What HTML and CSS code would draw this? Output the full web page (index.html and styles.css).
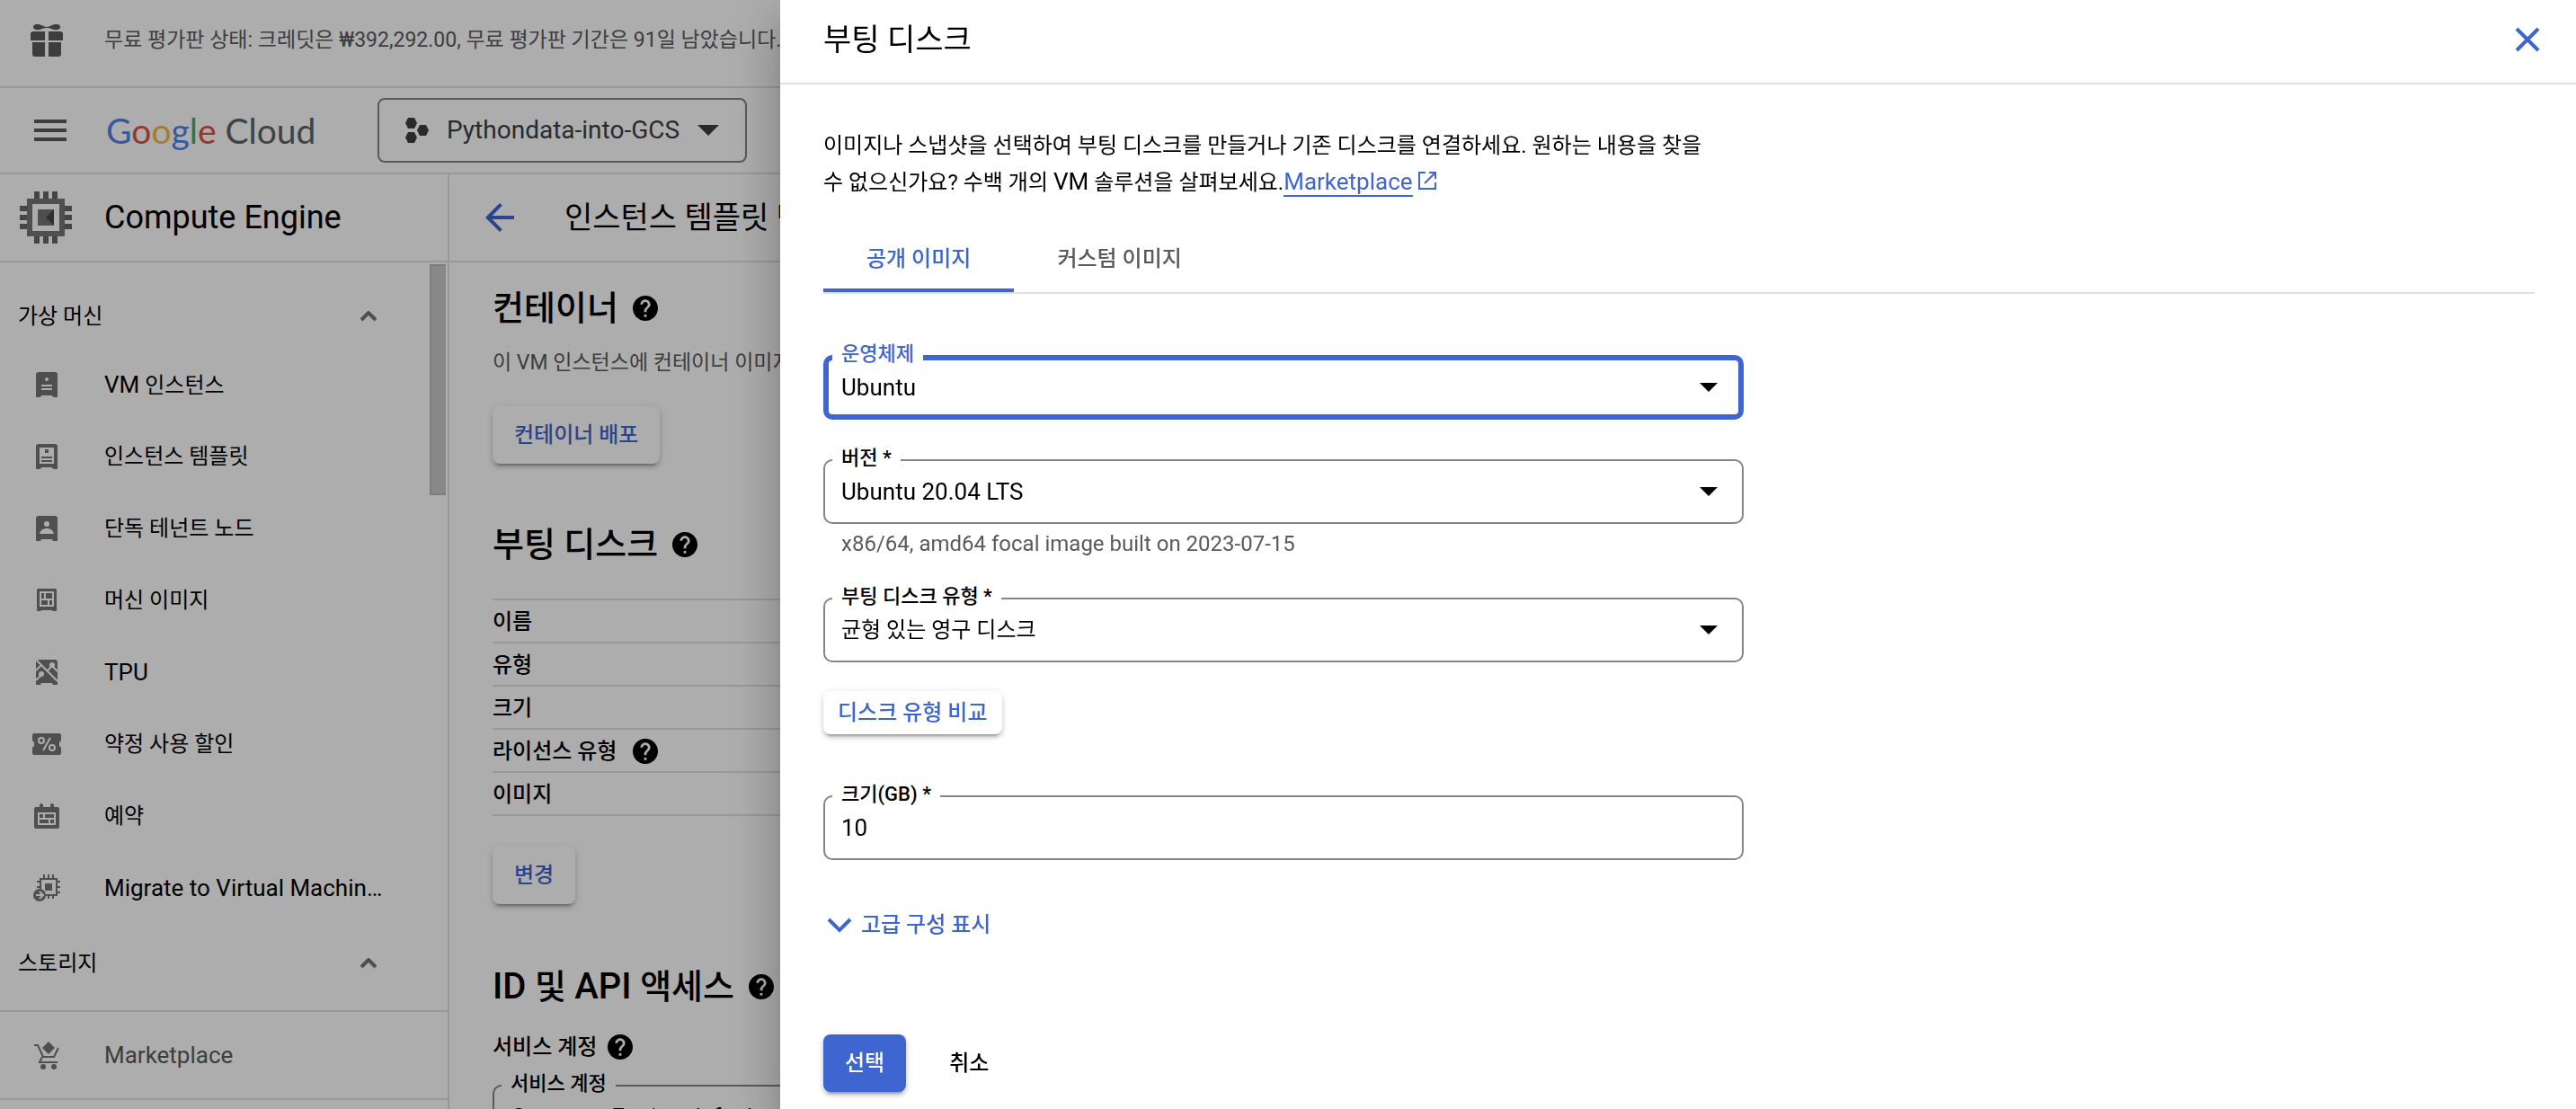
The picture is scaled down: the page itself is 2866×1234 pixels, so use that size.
FILE: index.html
```html
<!DOCTYPE html>
<html lang="ko">
<head>
  <meta charset="UTF-8" />
  <meta name="viewport" content="width=device-width, initial-scale=1.0" />
  <title>인스턴스 템플릿 만들기</title>
  <link rel="stylesheet" href="styles.css">
</head>
<body>

  <svg class="sprite" aria-hidden="true">
    <symbol id="icon-help" viewBox="2 2 20 20">
      <path d="M12 2C6.48 2 2 6.48 2 12s4.48 10 10 10 10-4.48 10-10S17.52 2 12 2zm1 17h-2v-2h2v2zm2.07-7.75l-.9.92C13.45 12.9 13 13.5 13 15h-2v-.5c0-1.1.45-2.1 1.17-2.83l1.24-1.26c.37-.36.59-.86.59-1.41 0-1.1-.9-2-2-2s-2 .9-2 2H8c0-2.21 1.79-4 4-4s4 1.79 4 4c0 .88-.36 1.68-.93 2.25z"/>
    </symbol>
    <symbol id="icon-arrow" viewBox="0 0 20 10">
      <path d="M0 0h20L10 10z"/>
    </symbol>
    <symbol id="icon-up" viewBox="0 0 20 12">
      <path d="M2 10l8-8 8 8" fill="none" stroke="currentColor" stroke-width="4"/>
    </symbol>
  </svg>

  <div class="app">
    <div class="trial">
      <svg class="trial-icon" viewBox="0 0 36 36">
        <path d="M3 3c0-3 4-4 9-2 3 1 4 2 6 2s3-1 6-2c5-2 9-1 9 2 0 4-6 4-10 2-2-1-3-1-5-1s-3 0-5 1c-4 2-10 2-10-2z"/>
        <path d="M3 8h13v10H0v-7a3 3 0 0 1 3-3zM20 8h13a3 3 0 0 1 3 3v7H20zM2 20h14v16H5a3 3 0 0 1-3-3zM20 20h14v13a3 3 0 0 1-3 3H20z"/>
      </svg>
      <span>무료 평가판 상태: 크레딧은 ₩392,292.00, 무료 평가판 기간은 91일 남았습니다.</span>
    </div>

    <header class="topbar">
      <button class="menu-button" aria-label="메뉴">
        <svg viewBox="0 0 36 24"><path d="M0 0h36v4H0zM0 10h36v4H0zM0 20h36v4H0z"/></svg>
      </button>
      <a class="logo" href="#"><span class="g-blue">G</span><span class="g-red">o</span><span class="g-yellow">o</span><span class="g-blue">g</span><span class="g-green">l</span><span class="g-red">e</span> <span class="cloud">Cloud</span></a>
      <button class="project">
        <svg class="project-icon" viewBox="0 0 26 28">
          <path d="M3 0h7l3 6-3 6H3L0 6zM3 16h7l3 6-3 6H3l-3-6zM16 8h7l3 6-3 6h-7l-3-6z"/>
        </svg>
        Pythondata-into-GCS
        <svg class="project-arrow"><use href="#icon-arrow"/></svg>
      </button>
    </header>

    <div class="body">
      <aside class="sidebar">
        <div class="product">
          <svg class="product-icon" viewBox="0 0 58 58">
            <path fill="#666" d="M16 0h6v8h-6zM26 0h6v8h-6zM36 0h6v8h-6zM16 50h6v8h-6zM26 50h6v8h-6zM36 50h6v8h-6zM0 16h8v6H0zM0 26h8v6H0zM0 36h8v6H0zM50 16h8v6h-8zM50 26h8v6h-8zM50 36h8v6h-8z"/>
            <path fill="#757575" fill-rule="evenodd" d="M8 8h42v42H8zM14 14v30h30V14z"/>
            <path fill="#757575" d="M20 20h18v18H20z"/>
            <path fill="#484848" d="M38 20v18l-9-9z"/>
          </svg>
          <span>Compute Engine</span>
        </div>

        <nav class="nav">
          <button class="nav-group">가상 머신 <svg><use href="#icon-up"/></svg></button>
          <a class="nav-item" href="#">
            <svg viewBox="0 0 32 32">
              <path d="M7 2h18a3 3 0 0 1 3 3v25h-5l-1-2H10l-1 2H4V5a3 3 0 0 1 3-3z"/>
              <path fill="#fff" d="M10 16h12v2H10zM10 20h12v2H10z"/><circle fill="#fff" cx="16" cy="10" r="2"/>
            </svg>
            <span><span class="latin">VM</span> 인스턴스</span>
          </a>
          <a class="nav-item" href="#">
            <svg viewBox="0 0 32 32">
              <path fill-rule="evenodd" d="M7 2h18a3 3 0 0 1 3 3v25h-5l-1-2H10l-1 2H4V5a3 3 0 0 1 3-3zM8 6v18h16V6z"/>
              <path d="M14 8h4v4h-4zM10 16h12v2H10zM10 20h12v2H10z"/>
            </svg>
            <span>인스턴스 템플릿</span>
          </a>
          <a class="nav-item" href="#">
            <svg viewBox="0 0 32 32">
              <path d="M7 2h18a3 3 0 0 1 3 3v25h-5l-1-2H10l-1 2H4V5a3 3 0 0 1 3-3z"/>
              <circle fill="#fff" cx="16" cy="11" r="3"/><path fill="#fff" d="M8 22c1-4 4-6 8-6s7 2 8 6z"/>
            </svg>
            <span>단독 테넌트 노드</span>
          </a>
          <a class="nav-item" href="#">
            <svg viewBox="0 0 32 32">
              <path fill-rule="evenodd" d="M6 3h20l1 1v24h-4l-1-1H10l-1 1H5V4zM8 6v17h16V6z"/>
              <path d="M10 8h3v6h-3zM15 8h7v6h-7zM10 16h7v5h-7zM19 16h3v5h-3z"/>
            </svg>
            <span>머신 이미지</span>
          </a>
          <a class="nav-item" href="#">
            <svg viewBox="0 0 32 32">
              <path d="M7 2h18a3 3 0 0 1 3 3v25h-5l-1-2H10l-1 2H4V5a3 3 0 0 1 3-3z"/>
              <path d="M4 2l24 24M4 14l6-6M4 25l7-7M16 15l7-7M22 9l6 6" fill="none" stroke="#fff" stroke-width="2"/>
              <circle fill="#fff" cx="22" cy="8" r="3"/><circle fill="#fff" cx="10" cy="18" r="3"/>
            </svg>
            <span class="latin">TPU</span>
          </a>
          <a class="nav-item" href="#">
            <svg viewBox="0 0 32 32">
              <path d="M2 4h28a2 2 0 0 1 2 2v6l-2 2v4l2 2v6a2 2 0 0 1-2 2H2a2 2 0 0 1-2-2v-6l2-2v-4l-2-2V6a2 2 0 0 1 2-2z"/>
              <g fill="none" stroke="#fff" stroke-width="2"><circle cx="10" cy="12" r="3"/><circle cx="22" cy="20" r="3"/><path d="M20 9l-8 14"/></g>
            </svg>
            <span>약정 사용 할인</span>
          </a>
          <a class="nav-item" href="#">
            <svg viewBox="0 0 32 32">
              <path fill-rule="evenodd" d="M8 6V4a2 2 0 0 1 4 0v2h8V4a2 2 0 0 1 4 0v2h4a2 2 0 0 1 2 2v20a2 2 0 0 1-2 2H4a2 2 0 0 1-2-2V8a2 2 0 0 1 2-2zM6 12v14h20V12z"/>
              <path d="M8 14h4v4H8zM14 14h10v4H14zM8 20h10v4H8zM20 20h4v4h-4z"/>
            </svg>
            <span>예약</span>
          </a>
          <a class="nav-item" href="#">
            <svg viewBox="0 0 32 32">
              <path fill-rule="evenodd" d="M8 5h20v20H8zM10 7v16h16V7zM14 11h8v8h-8z"/>
              <path d="M14 11h8v8h-8z"/>
              <path d="M12 1h2v4h-2zM17 1h2v4h-2zM22 1h2v4h-2zM17 25h2v3h-2zM22 25h2v3h-2zM28 8h3v2h-3zM28 14h3v2h-3zM28 20h3v2h-3zM5 8h3v2H5zM5 14h3v2H5z"/>
              <circle cx="8" cy="24" r="7"/>
              <path d="M4 24h7M8 20l4 4-4 4" fill="none" stroke="#fff" stroke-width="2"/>
            </svg>
            <span class="latin">Migrate to Virtual Machines</span>
          </a>
          <button class="nav-group">스토리지 <svg><use href="#icon-up"/></svg></button>
          <div class="scrollbar"></div>
        </nav>

        <a class="nav-footer" href="#">
          <svg viewBox="0 0 32 32">
            <path d="M18 1l7 7-7 7-7-7z"/>
            <path d="M2 5h4l6 13h12l5-10M11 18l-3 6h20" fill="none" stroke="currentColor" stroke-width="2"/>
            <circle cx="12" cy="29" r="3"/><circle cx="24" cy="29" r="3"/>
          </svg>
          <span class="latin">Marketplace</span>
        </a>
        <div class="nav-collapse"></div>
      </aside>

      <main class="main">
        <div class="page-title">
          <a class="back" href="#" aria-label="뒤로">
            <svg viewBox="4 4 16 16"><path d="M20 11H7.83l5.59-5.59L12 4l-8 8 8 8 1.41-1.41L7.83 13H20v-2z"/></svg>
          </a>
          <h1>인스턴스 템플릿 만들기</h1>
        </div>

        <div class="content">
          <h2>컨테이너 <svg class="help"><use href="#icon-help"/></svg></h2>
          <p class="hint">이 VM 인스턴스에 컨테이너 이미지를 배포합니다.</p>
          <button class="button">컨테이너 배포</button>

          <h2 class="disk-title">부팅 디스크 <svg class="help"><use href="#icon-help"/></svg></h2>
          <table class="details">
            <tr><th scope="row">이름</th></tr>
            <tr><th scope="row">유형</th></tr>
            <tr><th scope="row">크기</th></tr>
            <tr><th scope="row"><span class="with-help">라이선스 유형 <svg class="help"><use href="#icon-help"/></svg></span></th></tr>
            <tr><th scope="row">이미지</th></tr>
          </table>
          <button class="button">변경</button>

          <h2 class="access-title"><span><span class="latin-title">ID</span> 및 <span class="latin-title">API</span> 액세스</span> <svg class="help"><use href="#icon-help"/></svg></h2>
          <h3>서비스 계정 <svg class="help"><use href="#icon-help"/></svg></h3>
          <div class="field">
            <label for="account">서비스 계정</label>
            <select id="account"><option>Compute Engine default service account</option></select>
          </div>
        </div>
      </main>
    </div>
  </div>

  <div class="backdrop">
    <section class="drawer" role="dialog" aria-labelledby="drawer-title">
      <header class="drawer-header">
        <h2 id="drawer-title">부팅 디스크</h2>
        <button class="close" aria-label="닫기">
          <svg viewBox="0 0 28 28"><path d="M2 2l24 24M26 2L2 26" fill="none" stroke="currentColor" stroke-width="4"/></svg>
        </button>
      </header>

      <div class="drawer-body">
        <p class="intro">이미지나 스냅샷을 선택하여 부팅 디스크를 만들거나 기존 디스크를 연결하세요. 원하는 내용을 찾을 수 없으신가요? 수백 개의 <span class="latin">VM</span> 솔루션을 살펴보세요.<a class="latin" href="#">Marketplace</a>
          <svg class="external" viewBox="0 0 20 20"><path d="M8 1H1v18h18v-7M12 1h7v7M19 1L7 13" fill="none" stroke="currentColor" stroke-width="2"/></svg></p>

        <div class="tabs" role="tablist">
          <button class="tab active" role="tab" aria-selected="true">공개 이미지</button>
          <button class="tab" role="tab" aria-selected="false">커스텀 이미지</button>
        </div>

        <form class="form">
          <div class="field focused">
            <label for="os">운영체제</label>
            <select id="os"><option>Ubuntu</option></select>
            <svg class="arrow"><use href="#icon-arrow"/></svg>
          </div>

          <div class="field">
            <label for="version">버전 *</label>
            <select id="version"><option>Ubuntu 20.04 LTS</option></select>
            <svg class="arrow"><use href="#icon-arrow"/></svg>
          </div>
          <p class="helper">x86/64, amd64 focal image built on 2023-07-15</p>

          <div class="field">
            <label for="type">부팅 디스크 유형 *</label>
            <select id="type" class="korean"><option>균형 있는 영구 디스크</option></select>
            <svg class="arrow"><use href="#icon-arrow"/></svg>
          </div>

          <button type="button" class="button small">디스크 유형 비교</button>

          <div class="field size-field">
            <label for="size">크기(GB) *</label>
            <input id="size" type="text" value="10">
          </div>

          <button type="button" class="advanced">
            <svg viewBox="0 0 28 18"><path d="M2 3l12 12L26 3" fill="none" stroke="currentColor" stroke-width="4"/></svg>
            고급 구성 표시
          </button>

          <div class="actions">
            <button type="submit" class="button primary">선택</button>
            <button type="button" class="cancel">취소</button>
          </div>
        </form>
      </div>
    </section>
  </div>

</body>
</html>
```
FILE: styles.css
```css
* {
  box-sizing: border-box;
}

body {
  margin: 0;
  height: 100vh;
  overflow: hidden;
  background: #fff;
  color: #000;
  font-family: Roboto, "Noto Sans CJK KR", sans-serif;
  font-size: 24px;
  line-height: 32px;
}

h1, h2, h3, p {
  margin: 0;
  font-weight: 400;
}

button, select, input {
  font: inherit;
  color: inherit;
  background: none;
  border: 0;
  padding: 0;
  margin: 0;
}

a {
  color: inherit;
  text-decoration: none;
}

svg {
  fill: currentColor;
  flex: none;
}

.sprite {
  position: absolute;
  width: 0;
  height: 0;
}

/* Latin letters are set a step larger than Hangul */
.latin {
  font-size: 26px;
}

.app {
  height: 100vh;
  display: flex;
  flex-direction: column;
}

/* Top bars */
.trial {
  flex: none;
  display: flex;
  align-items: center;
  gap: 46px;
  height: 98px;
  padding: 0 34px 6px;
  border-bottom: 2px solid #e0e0e0;
  color: #5a5a5a;
  font-size: 23px;
  white-space: nowrap;
}

.trial-icon {
  width: 36px;
  height: 36px;
}

.topbar {
  flex: none;
  display: flex;
  align-items: center;
  height: 96px;
  padding-left: 38px;
  border-bottom: 2px solid #e0e0e0;
}

.menu-button {
  width: 36px;
  height: 24px;
  color: #5a5a5a;
}

.menu-button svg {
  display: block;
}

.logo {
  width: 302px;
  margin-left: 44px;
  font-family: Lato, sans-serif;
  font-size: 39px;
  line-height: 48px;
  white-space: nowrap;
}

.g-blue { color: #4f83e8; }
.g-red { color: #dd5144; }
.g-yellow { color: #f0bb40; }
.g-green { color: #58a55c; }
.cloud { color: #5f6368; }

.project {
  display: flex;
  align-items: center;
  gap: 20px;
  height: 72px;
  padding: 0 29px;
  border: 2px solid #80868b;
  border-radius: 8px;
  color: #3c4043;
  font-size: 28px;
}

.project-icon {
  width: 26px;
  height: 28px;
}

.project-arrow {
  width: 24px;
  height: 12px;
}

.body {
  flex: 1;
  display: flex;
  min-height: 0;
}

/* Sidebar */
.sidebar {
  flex: none;
  display: flex;
  flex-direction: column;
  width: 500px;
  border-right: 2px solid #e0e0e0;
}

.product, .page-title {
  flex: none;
  display: flex;
  align-items: center;
  height: 98px;
  border-bottom: 2px solid #e0e0e0;
}

.product {
  gap: 36px;
  padding-left: 22px;
  font-size: 36px;
}

.product-icon {
  width: 58px;
  height: 58px;
}

.nav {
  position: relative;
  flex: 1;
  min-height: 0;
  padding-top: 16px;
  overflow: hidden;
}

.nav-group {
  display: flex;
  align-items: center;
  justify-content: space-between;
  width: 100%;
  height: 72px;
  margin-top: 8px;
  padding: 0 78px 0 20px;
}

.nav-group svg {
  width: 20px;
  height: 12px;
  color: #757575;
}

.nav-item, .nav-footer {
  display: flex;
  align-items: center;
  gap: 48px;
  height: 80px;
  padding: 0 68px 0 36px;
}

.nav-item > span {
  overflow: hidden;
  text-overflow: ellipsis;
  white-space: nowrap;
}

.nav-item svg, .nav-footer svg {
  width: 32px;
  height: 32px;
  color: #757575;
}

.scrollbar {
  position: absolute;
  top: 2px;
  right: 2px;
  width: 18px;
  height: 257px;
  background: #c9c9c9;
  border: 2px solid #b8b8b8;
  border-right: 0;
}

.nav-footer {
  flex: none;
  height: 98px;
  border-top: 2px solid #e0e0e0;
  color: #5a5a5a;
}

.nav-collapse {
  flex: none;
  height: 12px;
  border-top: 2px solid #e0e0e0;
}

/* Page */
.main {
  flex: 1;
  min-width: 0;
  overflow: hidden;
}

.page-title {
  gap: 56px;
  padding-left: 40px;
}

.page-title h1 {
  font-size: 34px;
  line-height: 48px;
}

.back {
  width: 32px;
  height: 32px;
  color: #3f66d0;
}

.back svg {
  display: block;
}

.content {
  padding: 26px 48px 0;
}

.content h2 {
  display: flex;
  align-items: center;
  gap: 16px;
  font-size: 38px;
  font-weight: 500;
  line-height: 50px;
}

.latin-title {
  font-size: 40px;
}

.help {
  width: 28px;
  height: 28px;
}

.hint {
  margin: 20px 0 32px;
  color: #5a5a5a;
  font-size: 23px;
}

.button {
  display: block;
  height: 64px;
  padding: 0 24px;
  border-radius: 8px;
  background: #fff;
  color: #3f66d0;
  font-weight: 500;
  box-shadow: 0 6px 2px -4px rgba(0, 0, 0, 0.2), 0 4px 4px rgba(0, 0, 0, 0.14), 0 2px 10px rgba(0, 0, 0, 0.12);
}

.content .disk-title {
  margin: 65px 0 35px;
}

.details {
  width: 100%;
  margin-bottom: 34px;
  border-collapse: collapse;
}

.details th {
  height: 48px;
  padding: 2px 0 0;
  border-top: 2px solid #e0e0e0;
  border-bottom: 2px solid #e0e0e0;
  font-weight: 500;
  text-align: left;
}

.with-help, .content h3 {
  display: flex;
  align-items: center;
  gap: 18px;
}

.content .access-title {
  margin: 67px 0 26px;
}

.content h3 {
  gap: 12px;
  margin-bottom: 26px;
  font-size: 24px;
  font-weight: 500;
}

/* Outlined form fields */
.field {
  position: relative;
}

.field label {
  position: absolute;
  top: -17px;
  left: 10px;
  padding: 0 10px;
  background: #fff;
  font-size: 22px;
  font-weight: 500;
}

.field select, .field input {
  display: block;
  width: 100%;
  height: 72px;
  padding: 0 18px;
  border: 2px solid #80868b;
  border-radius: 10px;
  outline: 0;
  appearance: none;
  font-size: 26px;
}

.field .korean {
  font-size: 24px;
}

.focused select {
  padding: 0 14px;
  border: 6px solid #3f66d0;
}

.focused label {
  color: #3f66d0;
}

.arrow {
  position: absolute;
  top: 31px;
  right: 29px;
  width: 20px;
  height: 10px;
  pointer-events: none;
}

/* Drawer */
.backdrop {
  position: fixed;
  inset: 0;
  display: flex;
  justify-content: flex-end;
  background: rgba(0, 0, 0, 0.32);
}

.drawer {
  width: calc(100% - 868px);
  background: #fff;
  box-shadow: 0 16px 20px -10px rgba(0, 0, 0, 0.2), 0 32px 48px 4px rgba(0, 0, 0, 0.14), 0 12px 60px 10px rgba(0, 0, 0, 0.12);
}

.drawer-header {
  display: flex;
  align-items: center;
  justify-content: space-between;
  height: 94px;
  padding: 0 40px 4px 48px;
  border-bottom: 2px solid #e0e0e0;
}

.drawer-header h2 {
  font-size: 34px;
  line-height: 48px;
}

.close {
  width: 28px;
  height: 28px;
  color: #3f66d0;
}

.close svg {
  display: block;
}

.drawer-body {
  padding: 48px 46px 0 48px;
}

.intro {
  max-width: 1000px;
  line-height: 40px;
}

.intro a {
  color: #3f66d0;
  border-bottom: 2px solid #3f66d0;
}

.external {
  width: 20px;
  height: 20px;
  color: #3f66d0;
}

.tabs {
  display: flex;
  margin-top: 26px;
  border-bottom: 2px solid #e0e0e0;
}

.tab {
  height: 76px;
  padding: 6px 48px 0;
  border-bottom: 4px solid transparent;
  color: #5a5a5a;
  font-weight: 500;
}

.tab.active {
  color: #3f66d0;
  border-bottom-color: #3f66d0;
}

.form {
  max-width: 1024px;
  padding-top: 68px;
}

.drawer .field + .field, .helper + .field {
  margin-top: 44px;
}

.helper {
  margin-top: 6px;
  padding-left: 20px;
  color: #5a5a5a;
}

.button.small {
  height: 48px;
  margin-top: 32px;
  padding: 0 16px;
}

.size-field {
  margin-top: 68px;
}

.advanced {
  display: flex;
  align-items: center;
  gap: 10px;
  height: 40px;
  margin-top: 52px;
  padding-left: 4px;
  color: #3f66d0;
  font-weight: 500;
}

.advanced svg {
  width: 28px;
  height: 18px;
}

.actions {
  display: flex;
  align-items: center;
  gap: 48px;
  margin-top: 102px;
}

.button.primary {
  background: #3f66d0;
  color: #fff;
}

.cancel {
  font-weight: 500;
}
```
